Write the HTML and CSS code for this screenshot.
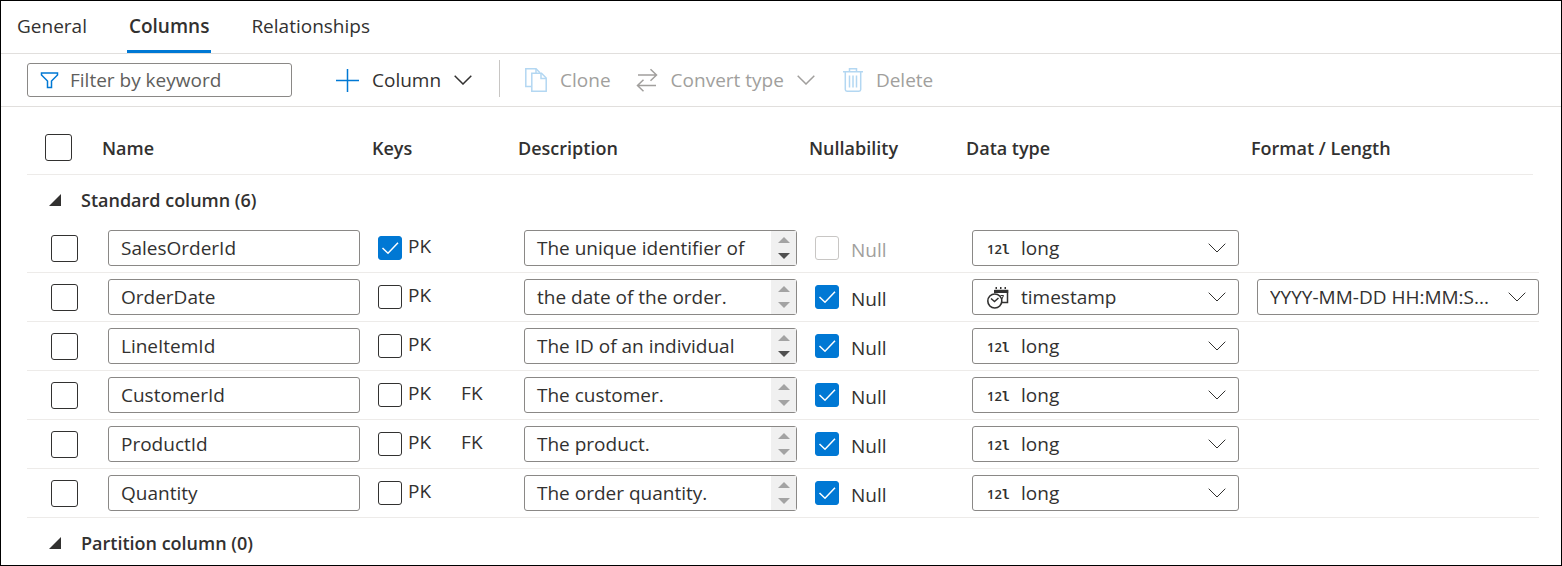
FILE: index.html
```html
<!DOCTYPE html>
<html lang="en">
<head>
<meta charset="utf-8">
<title>Table columns</title>
<link rel="stylesheet" href="styles.css">
</head>
<body>
<svg class="sprite" aria-hidden="true">
  <symbol id="chevron" viewBox="0 0 18 10"><path d="M.7.7 9 9 17.300.7" fill="none" stroke="currentColor"/></symbol>
  <symbol id="up" viewBox="0 0 12 6"><path d="M0 6 6 0l6 6z" fill="currentColor"/></symbol>
  <symbol id="down" viewBox="0 0 12 6"><path d="M0 0l6 6 6-6z" fill="currentColor"/></symbol>
  <symbol id="corner" viewBox="0 0 12 12"><path d="M12 0v12H0z" fill="currentColor"/></symbol>
</svg>
<main class="page">
  <nav class="tabs">
    <a class="tab" href="#general">General</a>
    <a class="tab tab-active" href="#columns" aria-current="page">Columns</a>
    <a class="tab" href="#relationships">Relationships</a>
  </nav>

  <div class="toolbar">
    <label class="filter">
      <svg width="20" height="17" viewBox="0 0 20 17" aria-hidden="true"><path d="M1.500 1h16v2L11.500 9v6.500h-4V9l-6-6z" fill="none" stroke="#0078d4" stroke-width="1.500"/></svg>
      <input type="text" placeholder="Filter by keyword" aria-label="Filter by keyword">
    </label>
    <button class="command command-add" type="button">
      <svg width="23" height="23" viewBox="0 0 23 23" aria-hidden="true"><path d="M0 11.500h23M11.500 0v23" stroke="#0078d4" stroke-width="1.500"/></svg>
      <span>Column</span>
      <svg class="chevron" aria-hidden="true"><use href="#chevron"/></svg>
    </button>
    <span class="divider"></span>
    <button class="command command-clone" type="button" disabled>
      <svg width="22" height="24" viewBox="0 0 22 24" fill="none" stroke="#b3d7f2" stroke-width="1.500" aria-hidden="true"><path d="M6.500 18.500H.8V.8h10.200l4 4"/><path d="M6.800 5.300h9.700l4.700 4.700v13.200H6.800z"/><path d="M16 5.500V10.500h5"/><path d="M11 .8V5"/></svg>
      <span>Clone</span>
    </button>
    <button class="command command-convert" type="button" disabled>
      <svg width="22" height="24" viewBox="0 0 22 24" fill="none" stroke="#a19f9d" stroke-width="1.500" aria-hidden="true"><path d="M2 7h18.500M14.500 1.300 20.500 7l-6 5.700M20 17.500H1.500M7.500 11.800l-6 5.700 6 5.700"/></svg>
      <span>Convert type</span>
      <svg class="chevron" aria-hidden="true"><use href="#chevron"/></svg>
    </button>
    <button class="command command-delete" type="button" disabled>
      <svg width="20" height="24" viewBox="0 0 20 24" fill="none" stroke="#b3d7f2" stroke-width="1.500" aria-hidden="true"><path d="M0 3.800h20M6.500 3.500V.8h7v2.700M2.300 4v17.500q0 1.700 1.700 1.700h12q1.700 0 1.700-1.700V4M6.500 7.500v12M10 7.500v12M13.500 7.500v12"/></svg>
      <span>Delete</span>
    </button>
  </div>

  <div class="content">
    <table class="columns">
      <colgroup><col class="c-check"><col class="c-name"><col class="c-keys"><col class="c-desc"><col class="c-null"><col class="c-type"><col class="c-format"></colgroup>
      <thead>
        <tr>
          <th class="head-check"><input class="check check-lg" type="checkbox" aria-label="Select all"></th>
          <th>Name</th><th>Keys</th><th>Description</th><th>Nullability</th><th>Data type</th><th class="head-last">Format / Length</th>
        </tr>
      </thead>
      <tbody>
        <tr class="group"><td colspan="7"><button type="button" aria-expanded="true"><svg width="12" height="12" aria-hidden="true"><use href="#corner"/></svg><span>Standard column (6)</span></button></td></tr>
        <tr class="row">
          <td class="row-check"><input class="check check-lg" type="checkbox" aria-label="Select SalesOrderId"></td>
          <td><input class="box name" type="text" value="SalesOrderId" aria-label="Name"></td>
          <td><div class="keys"><label><input class="check" type="checkbox" checked><span>PK</span></label></div></td>
          <td><div class="box desc"><textarea rows="1" aria-label="Description">The unique identifier of</textarea><span class="scroller"><button type="button" aria-label="Scroll up"><svg><use href="#up"/></svg></button><button class="can-scroll" type="button" aria-label="Scroll down"><svg><use href="#down"/></svg></button></span></div></td>
          <td><label class="null"><input class="check" type="checkbox" disabled><span>Null</span></label></td>
          <td><div class="box picker"><span class="long-icon" aria-hidden="true">12<i>l</i></span><select aria-label="Data type"><option>long</option></select><svg class="chevron" aria-hidden="true"><use href="#chevron"/></svg></div></td>
          <td></td>
        </tr>
        <tr class="row">
          <td class="row-check"><input class="check check-lg" type="checkbox" aria-label="Select OrderDate"></td>
          <td><input class="box name" type="text" value="OrderDate" aria-label="Name"></td>
          <td><div class="keys"><label><input class="check" type="checkbox"><span>PK</span></label></div></td>
          <td><div class="box desc"><textarea rows="1" aria-label="Description">the date of the order.</textarea><span class="scroller"><button type="button" aria-label="Scroll up"><svg><use href="#up"/></svg></button><button type="button" aria-label="Scroll down"><svg><use href="#down"/></svg></button></span></div></td>
          <td><label class="null"><input class="check" type="checkbox" checked><span>Null</span></label></td>
          <td><div class="box picker"><svg class="time-icon" viewBox="0 0 22 24" aria-hidden="true"><path d="M7.500 5.500h13v12h-6" fill="none" stroke="#323130" stroke-width="1.500"/><path d="M7 5h14.200v3H7zM8.500 2H10v2H8.500zM13 2h1.500v2H13zM17.500 2H19v2h-1.500z" fill="#323130"/><path d="M13.500 10.500h3l-2 4.500" fill="none" stroke="#323130"/><circle cx="7.800" cy="16" r="7" fill="#fff" stroke="#323130" stroke-width="1.600"/><path d="M4 13.500l3.500 3 4-3.500" fill="none" stroke="#323130" stroke-width="1.500"/></svg><select aria-label="Data type"><option>timestamp</option></select><svg class="chevron" aria-hidden="true"><use href="#chevron"/></svg></div></td>
          <td class="cell-last"><div class="box picker picker-format"><select aria-label="Format"><option>YYYY-MM-DD HH:MM:S...</option></select><svg class="chevron" aria-hidden="true"><use href="#chevron"/></svg></div></td>
        </tr>
        <tr class="row">
          <td class="row-check"><input class="check check-lg" type="checkbox" aria-label="Select LineItemId"></td>
          <td><input class="box name" type="text" value="LineItemId" aria-label="Name"></td>
          <td><div class="keys"><label><input class="check" type="checkbox"><span>PK</span></label></div></td>
          <td><div class="box desc"><textarea rows="1" aria-label="Description">The ID of an individual</textarea><span class="scroller"><button type="button" aria-label="Scroll up"><svg><use href="#up"/></svg></button><button class="can-scroll" type="button" aria-label="Scroll down"><svg><use href="#down"/></svg></button></span></div></td>
          <td><label class="null"><input class="check" type="checkbox" checked><span>Null</span></label></td>
          <td><div class="box picker"><span class="long-icon" aria-hidden="true">12<i>l</i></span><select aria-label="Data type"><option>long</option></select><svg class="chevron" aria-hidden="true"><use href="#chevron"/></svg></div></td>
          <td></td>
        </tr>
        <tr class="row">
          <td class="row-check"><input class="check check-lg" type="checkbox" aria-label="Select CustomerId"></td>
          <td><input class="box name" type="text" value="CustomerId" aria-label="Name"></td>
          <td><div class="keys"><label><input class="check" type="checkbox"><span>PK</span></label><span class="fk">FK</span></div></td>
          <td><div class="box desc"><textarea rows="1" aria-label="Description">The customer.</textarea><span class="scroller"><button type="button" aria-label="Scroll up"><svg><use href="#up"/></svg></button><button type="button" aria-label="Scroll down"><svg><use href="#down"/></svg></button></span></div></td>
          <td><label class="null"><input class="check" type="checkbox" checked><span>Null</span></label></td>
          <td><div class="box picker"><span class="long-icon" aria-hidden="true">12<i>l</i></span><select aria-label="Data type"><option>long</option></select><svg class="chevron" aria-hidden="true"><use href="#chevron"/></svg></div></td>
          <td></td>
        </tr>
        <tr class="row">
          <td class="row-check"><input class="check check-lg" type="checkbox" aria-label="Select ProductId"></td>
          <td><input class="box name" type="text" value="ProductId" aria-label="Name"></td>
          <td><div class="keys"><label><input class="check" type="checkbox"><span>PK</span></label><span class="fk">FK</span></div></td>
          <td><div class="box desc"><textarea rows="1" aria-label="Description">The product.</textarea><span class="scroller"><button type="button" aria-label="Scroll up"><svg><use href="#up"/></svg></button><button type="button" aria-label="Scroll down"><svg><use href="#down"/></svg></button></span></div></td>
          <td><label class="null"><input class="check" type="checkbox" checked><span>Null</span></label></td>
          <td><div class="box picker"><span class="long-icon" aria-hidden="true">12<i>l</i></span><select aria-label="Data type"><option>long</option></select><svg class="chevron" aria-hidden="true"><use href="#chevron"/></svg></div></td>
          <td></td>
        </tr>
        <tr class="row">
          <td class="row-check"><input class="check check-lg" type="checkbox" aria-label="Select Quantity"></td>
          <td><input class="box name" type="text" value="Quantity" aria-label="Name"></td>
          <td><div class="keys"><label><input class="check" type="checkbox"><span>PK</span></label></div></td>
          <td><div class="box desc"><textarea rows="1" aria-label="Description">The order quantity.</textarea><span class="scroller"><button type="button" aria-label="Scroll up"><svg><use href="#up"/></svg></button><button type="button" aria-label="Scroll down"><svg><use href="#down"/></svg></button></span></div></td>
          <td><label class="null"><input class="check" type="checkbox" checked><span>Null</span></label></td>
          <td><div class="box picker"><span class="long-icon" aria-hidden="true">12<i>l</i></span><select aria-label="Data type"><option>long</option></select><svg class="chevron" aria-hidden="true"><use href="#chevron"/></svg></div></td>
          <td></td>
        </tr>
        <tr class="group group-last"><td colspan="7"><button type="button" aria-expanded="true"><svg width="12" height="12" aria-hidden="true"><use href="#corner"/></svg><span>Partition column (0)</span></button></td></tr>
      </tbody>
    </table>
  </div>
</main>
</body>
</html>
```

FILE: styles.css
```css
* { box-sizing: border-box; }

body {
  margin: 0;
  background: #fff;
  color: #323130;
  font-family: "Open Sans", "Noto Sans", sans-serif;
  font-size: 19px;
  line-height: 26px;
}

button, input, textarea, select { font: inherit; color: inherit; margin: 0; }
button { border: 0; padding: 0; background: none; }
svg { display: block; flex: none; }
.sprite { position: absolute; width: 0; height: 0; }

.page { min-height: 100vh; border: 1px solid #000; }

.tabs {
  display: flex;
  gap: 38px;
  height: 53px;
  padding-left: 14px;
  border-bottom: 1px solid #e1dfdd;
}
.tab {
  padding: 12px 2px 0;
  border-bottom: 3px solid transparent;
  color: inherit;
  text-decoration: none;
}
.tab-active { border-bottom-color: #0078d4; font-weight: 600; }

.toolbar {
  display: flex;
  align-items: center;
  height: 53px;
  padding-left: 26px;
  border-bottom: 1px solid #e1dfdd;
}
.filter {
  display: flex;
  align-items: center;
  gap: 10px;
  width: 265px;
  height: 34px;
  padding: 0 12px;
  border: 1px solid #8a8886;
  border-radius: 3px;
}
.filter input { flex: 1; min-width: 0; border: 0; padding: 0; outline: 0; background: none; }
.filter input::placeholder { color: #605e5c; opacity: 1; }
.chevron { width: 18px; height: 10px; }
.command { display: flex; align-items: center; gap: 13px; white-space: nowrap; }
.command .chevron { stroke-width: 1.5; }
.command:disabled { color: #a19f9d; }
.command-add { margin-left: 44px; }
.divider { width: 1px; height: 37px; margin: 0 25px 4px 27px; background: #c8c6c4; }
.command-convert { margin-left: 25px; }
.command-delete { margin-left: 28px; }

.content { padding: 14px 22px 0 26px; }
.columns { width: 100%; border-collapse: separate; border-spacing: 0; table-layout: fixed; }
.c-check { width: 75px; }
.c-name { width: 270px; }
.c-keys { width: 146px; }
.c-desc { width: 291px; }
.c-null { width: 157px; }
.c-type { width: 285px; }
.c-format { width: 288px; }

th {
  height: 54px;
  padding: 0;
  border-bottom: 1px solid #edebe9;
  text-align: left;
  font-weight: 600;
  font-size: 18px;
}
.head-check { padding-left: 18px; }
.head-last {
  border-bottom: 0;
  background: linear-gradient(#edebe9, #edebe9) left bottom / calc(100% - 6px) 1px no-repeat;
}

.group td { height: 49px; padding: 0 0 0 22px; font-weight: 600; font-size: 18px; }
.group-last td { height: 47px; padding-top: 2px; }
.group button { display: flex; align-items: center; gap: 20px; }

.row td { height: 49px; padding: 0 12px 0 6px; border-bottom: 1px solid #edebe9; }
.row .row-check { padding-left: 24px; }
.row .cell-last { padding-right: 0; }

.check {
  appearance: none;
  display: block;
  flex: none;
  width: 24px;
  height: 24px;
  border: 1px solid #323130;
  border-radius: 3px;
  background: #fff;
}
.check-lg { width: 27px; height: 27px; }
.check:checked {
  border-color: #0078d4;
  background: #0078d4 url("data:image/svg+xml,%3Csvg xmlns='http://www.w3.org/2000/svg' viewBox='0 0 24 24'%3E%3Cpath d='M4.500 12l5.500 5.300L20 6.800' fill='none' stroke='white' stroke-width='1.500'/%3E%3C/svg%3E") center / 24px 24px no-repeat;
}
.check:disabled { border-color: #c8c6c4; }
.check:disabled + span { color: #a19f9d; }

.box {
  display: flex;
  align-items: center;
  width: 100%;
  height: 36px;
  border: 1px solid #8a8886;
  border-radius: 3px;
  background: #fff;
}
.name { padding: 0 12px; }

.keys { display: flex; align-items: center; gap: 30px; }
.keys label { display: flex; align-items: center; gap: 6px; }
.keys span { padding-bottom: 4px; }
.null { display: flex; align-items: center; gap: 12px; }
.null span { padding-top: 3px; }

.desc textarea {
  flex: 1;
  min-width: 0;
  height: 26px;
  padding: 0 0 0 12px;
  border: 0;
  outline: 0;
  resize: none;
  overflow: hidden;
  white-space: nowrap;
  background: none;
}
.scroller {
  display: grid;
  align-content: center;
  gap: 10px;
  width: 25px;
  height: 100%;
  background: #f0f0f0;
  color: #a3a3a3;
}
.scroller button { display: grid; justify-content: center; }
.scroller svg { width: 12px; height: 6px; }
.scroller .can-scroll { color: #505050; }

.picker { padding: 0 12px 0 14px; }
.picker select {
  flex: 1;
  min-width: 0;
  appearance: none;
  border: 0;
  padding: 0;
  outline: 0;
  background: none;
}
.picker-format { padding-left: 12px; }
.long-icon { width: 34px; padding-top: 2px; font-size: 13px; font-weight: 600; }
.long-icon i { font-family: "DejaVu Sans Mono", monospace; font-style: normal; }
.time-icon { width: 22px; height: 24px; margin-right: 12px; }
```
